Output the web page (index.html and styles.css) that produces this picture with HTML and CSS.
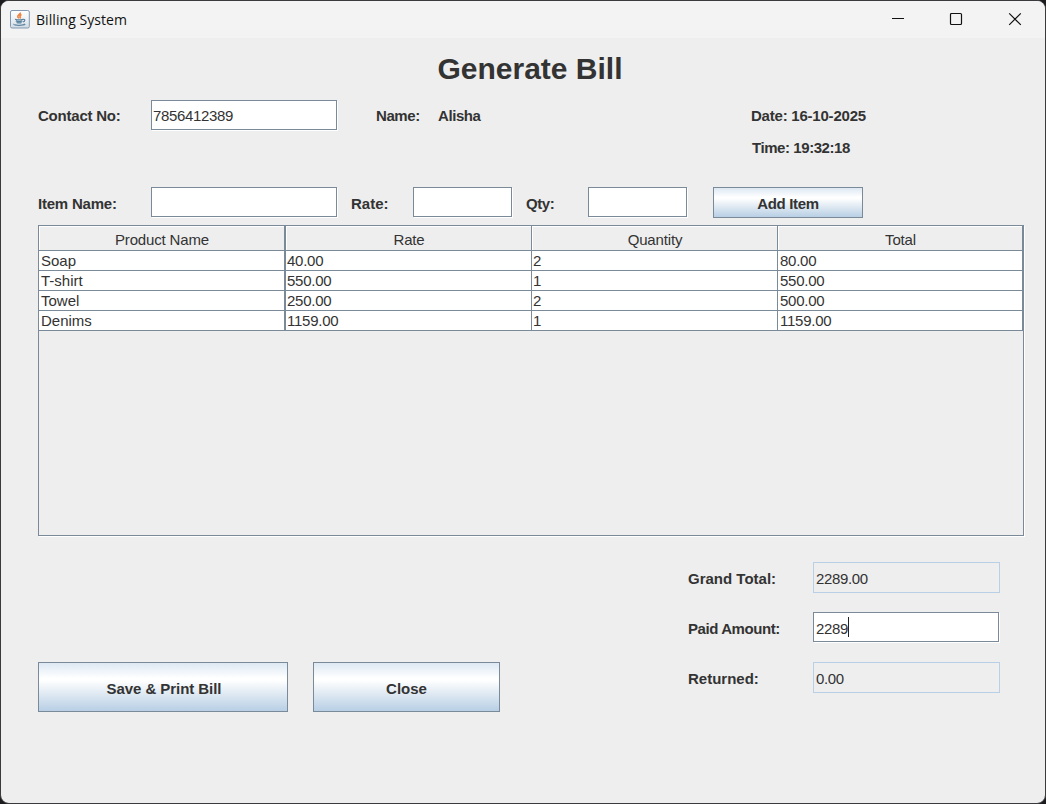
FILE: index.html
```html
<!DOCTYPE html>
<html lang="en">
<head>
<meta charset="utf-8">
<title>Billing System</title>
<link rel="stylesheet" href="styles.css">
</head>
<body>
<div class="window">
  <header class="titlebar">
    <svg class="app-icon" width="20" height="20" viewBox="0 0 20 20">
      <defs><linearGradient id="tile" x1="0" y1="0" x2="0" y2="1"><stop offset="0" stop-color="#fff"/><stop offset=".5" stop-color="#eef1f4"/><stop offset="1" stop-color="#cfdae4"/></linearGradient></defs>
      <rect x=".5" y=".5" width="18.8" height="17.500" rx="1.5" fill="url(#tile)" stroke="#8299b0"/>
      <path d="M10.300 2.500c.6 1.700-3.100 2.500-2.500 4.200.2.700.9 1.200 1.200 1.700M11.500 4.500c-1.700.8-1.900 1.500-1.300 2.300.4.600.2 1.100-.3 1.500" fill="none" stroke="#ee8540" stroke-width="1.600"/>
      <path d="M5 9.200c2.200.8 6.100.7 8 0M5.800 10.900c1.800.8 4.900.7 6.600 0M6.600 12.500c1.500.6 3.600.6 5 0M13 9.300c2.400-.4 2.400 1.900-.1 2.700" fill="none" stroke="#55809f" stroke-width="1.200"/>
      <path d="M4 14c-1 1.500 9.300 2 11.200.1" fill="none" stroke="#6388a5" stroke-width="1.400"/>
    </svg>
    <span class="app-name">Billing System</span>
    <svg class="controls" width="130" height="14" viewBox="0 0 130 14" fill="none" stroke="#111">
      <path d="M0 6.500h12"/>
      <rect x="58.500" y="1.500" width="11" height="11" rx="1" stroke-width="1.200"/>
      <path d="M117.200 1.300l11.600 11.600M128.800 1.300l-11.600 11.600" stroke-width="1.200"/>
    </svg>
  </header>
  <main class="content">
    <h1 class="heading">Generate Bill</h1>
    <div class="customer-row">
      <label class="snug">Contact No:</label>
      <div class="field">7856412389</div>
      <label class="name-label tight">Name:</label>
      <span class="name tight">Alisha</span>
      <span class="date snug">Date: 16-10-2025</span>
    </div>
    <div class="time tight">Time: 19:32:18</div>
    <div class="item-row">
      <label class="snug">Item Name:</label>
      <div class="field"></div>
      <label class="rate-label">Rate:</label>
      <div class="field"></div>
      <label class="qty-label tight">Qty:</label>
      <div class="field"></div>
      <button class="button add tight">Add Item</button>
    </div>
    <div class="table-pane">
      <div class="table">
        <div class="tr head"><span>Product Name</span><span>Rate</span><span>Quantity</span><span>Total</span></div>
        <div class="tr"><span>Soap</span><span>40.00</span><span>2</span><span>80.00</span></div>
        <div class="tr"><span>T-shirt</span><span>550.00</span><span>1</span><span>550.00</span></div>
        <div class="tr"><span>Towel</span><span>250.00</span><span>2</span><span>500.00</span></div>
        <div class="tr"><span>Denims</span><span>1159.00</span><span>1</span><span>1159.00</span></div>
      </div>
    </div>
    <div class="footer">
      <div class="actions">
        <button class="button save">Save &amp; Print Bill</button>
        <button class="button">Close</button>
      </div>
      <div class="totals">
        <label>Grand Total:</label><div class="field readonly">2289.00</div>
        <label class="tight">Paid Amount:</label><div class="field">2289<i class="caret"></i></div>
        <label>Returned:</label><div class="field readonly">0.00</div>
      </div>
    </div>
  </main>
</div>
</body>
</html>
```
FILE: styles.css
```css
* { box-sizing: border-box; }
body {
  margin: 0;
  background: #1c1c1e;
  font: 15px/20px "Liberation Sans", Arial, sans-serif;
  color: #333;
}
.window {
  width: 1046px;
  height: 804px;
  border: 1px solid #3a3a3c;
  border-radius: 9px;
  background: #eee;
  overflow: hidden;
}
.titlebar {
  display: flex;
  align-items: center;
  height: 37px;
  padding: 0 23px 0 9px;
  background: #f3f3f3;
}
.app-icon { flex: none; margin-top: 1px; }
.app-name {
  flex: 1;
  margin-left: 6px;
  font: 14px/20px "Open Sans", "Noto Sans", sans-serif;
  letter-spacing: 0.06px;
  color: #111;
}
.controls { flex: none; margin-bottom: 1px; }
.content { padding: 11px 21px 0 37px; }
.heading {
  margin: 0;
  height: 40px;
  padding-right: 2px;
  font-size: 30px;
  line-height: 40px;
  text-align: center;
}
label, .name, .date, .time { font-weight: bold; white-space: nowrap; }
.snug { letter-spacing: -0.22px; }
.tight { letter-spacing: -0.43px; }
.customer-row {
  display: grid;
  grid-template-columns: 113px 186px 39px 62px 313px auto;
  align-items: center;
  height: 30px;
  margin-top: 11px;
}
.customer-row label, .name, .date { padding-top: 2px; }
.name-label { grid-column: 4; }
.time { margin: 8px 0 0 714px; }
.field {
  display: flex;
  align-items: center;
  height: 30px;
  padding: 1px 0 0 1px;
  border: 1px solid #7a8a99;
  background: #fff;
  box-shadow: 1px 1px #fff;
  letter-spacing: -0.34px;
}
.field.readonly {
  height: 31px;
  border-color: #b8cfe5;
  background: #eee;
  box-shadow: none;
}
.caret { width: 1px; height: 20px; background: #222; }
.item-row {
  display: grid;
  grid-template-columns: 113px 186px 14px 62px 99px 14px 62px 99px 26px 150px;
  align-items: center;
  height: 31px;
  margin-top: 29px;
}
.item-row .field { align-self: start; }
.rate-label { grid-column: 4; }
.qty-label { grid-column: 7; }
.item-row label { padding-top: 2px; }
.button {
  padding: 3px 0 0;
  border: 1px solid #7a8a99;
  background: linear-gradient(#dde8f3 0, #fff 32%, #fff 36%, #dce7f1 67%, #b8cfe5 100%);
  font: bold 15px/20px "Liberation Sans", Arial, sans-serif;
  color: #333;
}
.add { grid-column: 10; height: 31px; padding-top: 2px; letter-spacing: -0.35px; }
.save { padding-left: 2px; letter-spacing: -0.06px; }
.table-pane {
  width: 986px;
  height: 311px;
  margin-top: 7px;
  border: 1px solid #7a8a99;
  box-shadow: 1px 1px #fff;
}
.tr {
  display: grid;
  grid-template-columns: 247px 246px 246px 245px;
  height: 20px;
  background: #fff;
}
.tr span {
  height: 20px;
  padding-left: 2px;
  border: solid #7a8a99;
  border-width: 0 1px 1px 0;
  letter-spacing: -0.25px;
}
.tr span:first-child { border-right-width: 2px; letter-spacing: 0; }
.tr span:nth-child(2) { padding-left: 1px; }
.tr span:nth-child(3) { padding-left: 1px; }
.head { height: 25px; }
.head span {
  height: 25px;
  padding: 4px 0 0;
  line-height: 20px;
  text-align: center;
  background: #eee;
  box-shadow: inset 1px 1px #fff;
}
.head span:nth-child(n) { padding-left: 1px; letter-spacing: -0.15px; }
.footer {
  display: flex;
  justify-content: space-between;
  padding: 26px 24px 0 0;
}
.actions {
  display: grid;
  grid-template-columns: 250px 187px;
  grid-template-rows: 50px;
  gap: 25px;
  padding-top: 100px;
}
.totals {
  display: grid;
  grid-template-columns: 125px 187px;
  grid-template-rows: 31px 31px 31px;
  row-gap: 19px;
}
.totals label { padding-top: 7px; }
.totals .field { padding: 3px 0 0 2px; }
.totals .field:not(.readonly) { width: 186px; }
.totals .caret { margin-top: -3px; }
```
